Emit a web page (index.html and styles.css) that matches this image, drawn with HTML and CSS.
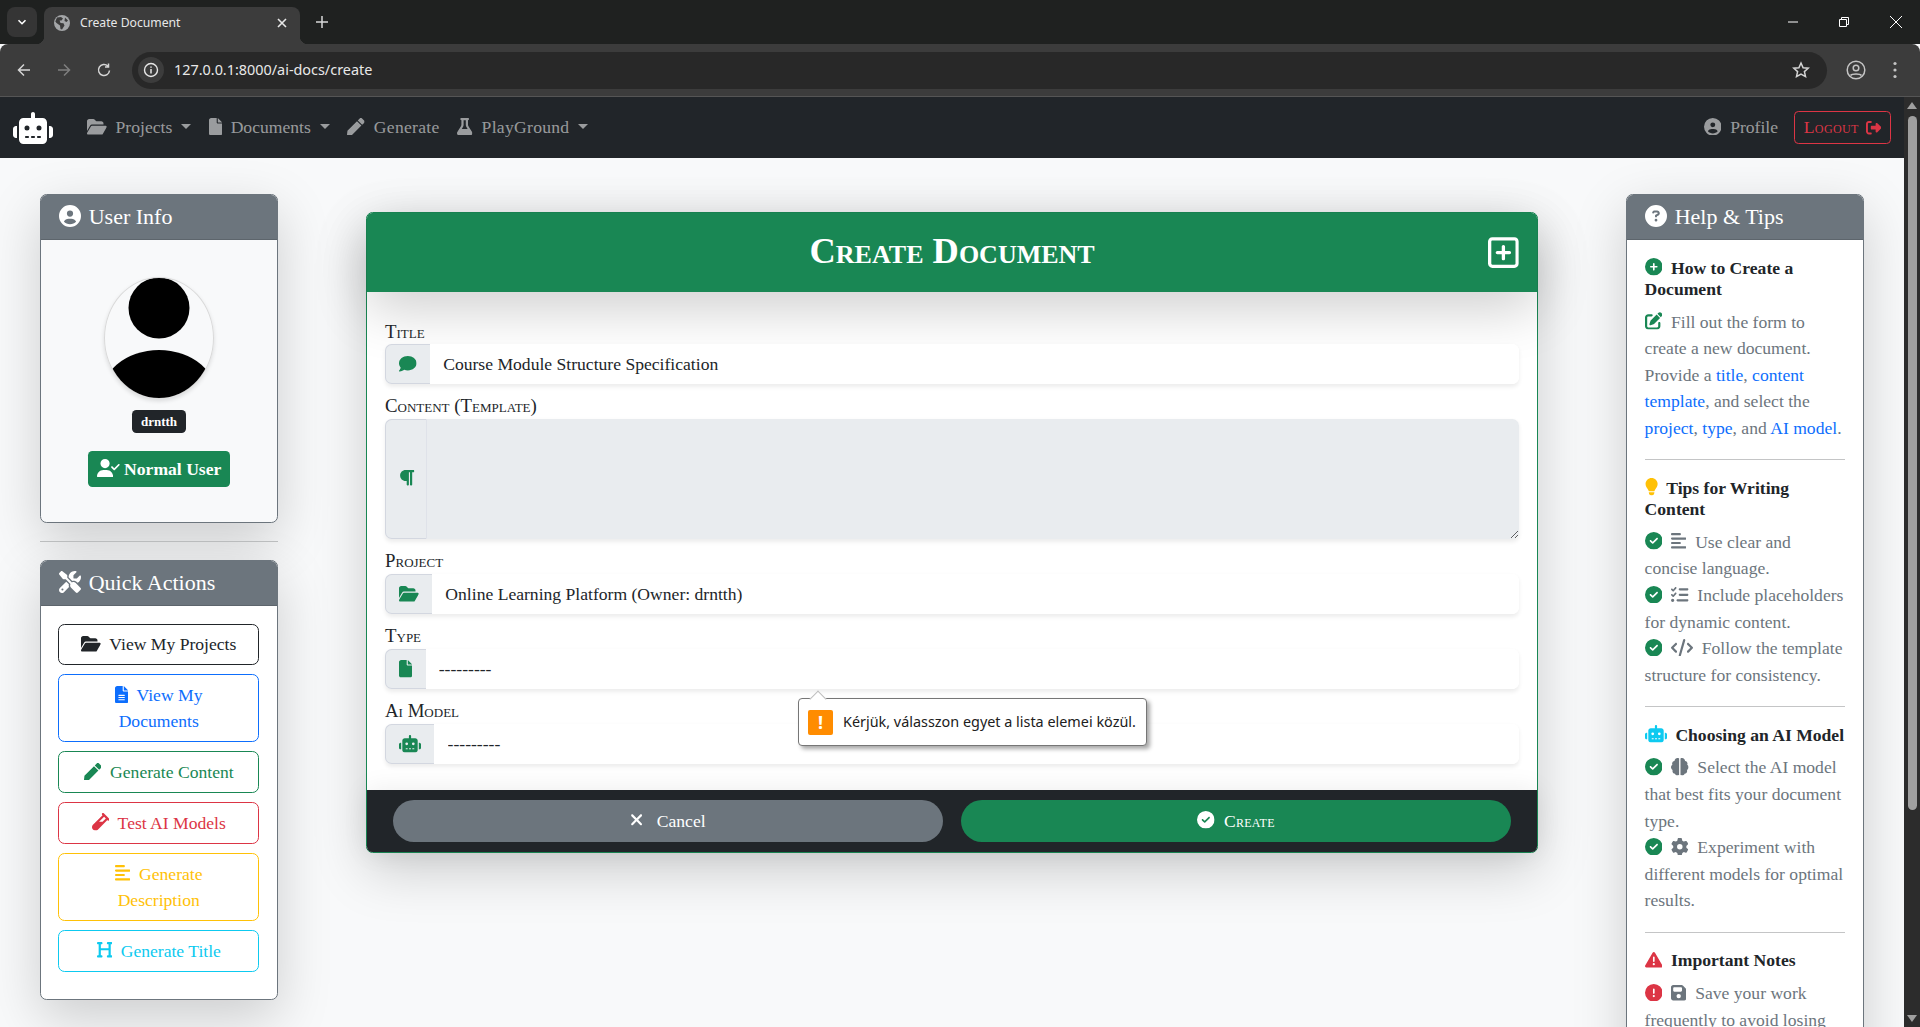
FILE: index.html
```html
<!DOCTYPE html>
<html lang="en">

<head>
    <meta charset="UTF-8">
    <meta name="viewport" content="width=device-width, initial-scale=1.0">
    <title>Create Document</title>
    <link rel="stylesheet" href="styles.css">
</head>

<body>
    <svg class="sprite" aria-hidden="true">
        <symbol id="i-robot" viewBox="0 0 640 512"><path d="M320 0c17.7 0 32 14.3 32 32V96H472c39.8 0 72 32.2 72 72V440c0 39.8-32.2 72-72 72H168c-39.8 0-72-32.2-72-72V168c0-39.8 32.2-72 72-72H288V32c0-17.7 14.3-32 32-32zM208 384c-8.8 0-16 7.2-16 16s7.2 16 16 16h32c8.8 0 16-7.2 16-16s-7.2-16-16-16H208zm96 0c-8.8 0-16 7.2-16 16s7.2 16 16 16h32c8.8 0 16-7.2 16-16s-7.2-16-16-16H304zm96 0c-8.8 0-16 7.2-16 16s7.2 16 16 16h32c8.8 0 16-7.2 16-16s-7.2-16-16-16H400zM264 256a40 40 0 1 0 -80 0 40 40 0 1 0 80 0zm152 40a40 40 0 1 0 0-80 40 40 0 1 0 0 80zM48 224H64V416H48c-26.5 0-48-21.5-48-48V272c0-26.5 21.5-48 48-48zm544 0c26.5 0 48 21.5 48 48v96c0 26.5-21.5 48-48 48H576V224h16z"/></symbol>
        <symbol id="i-folder" viewBox="0 0 576 512"><path d="M88.7 223.8L0 375.8V96C0 60.7 28.7 32 64 32H181.5c17 0 33.3 6.7 45.3 18.7l26.5 26.5c12 12 28.3 18.7 45.3 18.7H416c35.3 0 64 28.7 64 64v32H144c-22.8 0-43.8 12.1-55.3 31.8zm27.6 16.1C122.1 230 132.6 224 144 224H544c11.5 0 22 6.1 27.7 16.1s5.7 22.2-.1 32.1l-112 192C453.9 474 443.4 480 432 480H32c-11.5 0-22-6.1-27.7-16.1s-5.7-22.2 .1-32.1l112-192z"/></symbol>
        <symbol id="i-file" viewBox="0 0 384 512"><path d="M0 64C0 28.7 28.7 0 64 0H224V128c0 17.7 14.3 32 32 32H384V448c0 35.3-28.7 64-64 64H64c-35.3 0-64-28.7-64-64V64zm384 64H256V0L384 128z"/></symbol>
        <symbol id="i-file-lines" viewBox="0 0 384 512"><path d="M64 0C28.7 0 0 28.7 0 64V448c0 35.3 28.7 64 64 64H320c35.3 0 64-28.7 64-64V160H256c-17.7 0-32-14.3-32-32V0H64zM256 0V128H384L256 0zM112 256H272c8.8 0 16 7.2 16 16s-7.2 16-16 16H112c-8.8 0-16-7.2-16-16s7.2-16 16-16zm0 64H272c8.8 0 16 7.2 16 16s-7.2 16-16 16H112c-8.8 0-16-7.2-16-16s7.2-16 16-16zm0 64H272c8.8 0 16 7.2 16 16s-7.2 16-16 16H112c-8.8 0-16-7.2-16-16s7.2-16 16-16z"/></symbol>
        <symbol id="i-pen" viewBox="0 0 512 512"><path d="M290.74 93.24l128.02 128.02-277.99 277.99-114.14 12.6C11.35 513.54-1.56 500.62.14 485.34l12.7-114.22 277.9-277.88zm207.2-19.06l-60.11-60.11c-18.75-18.75-49.16-18.75-67.91 0l-56.55 56.55 128.02 128.02 56.55-56.55c18.75-18.76 18.75-49.16 0-67.91z"/></symbol>
        <symbol id="i-flask" viewBox="0 0 448 512"><path d="M288 0H160 128C110.3 0 96 14.3 96 32s14.3 32 32 32V196.8c0 11.8-3.3 23.5-9.5 33.5L10.3 406.2C3.6 417.2 0 429.7 0 442.6C0 480.9 31.1 512 69.4 512H378.6c38.3 0 69.4-31.1 69.4-69.4c0-12.8-3.6-25.4-10.3-36.4L329.5 230.4c-6.2-10.1-9.5-21.7-9.5-33.5V64c17.7 0 32-14.3 32-32s-14.3-32-32-32H288zM192 196.8V64h64V196.8c0 23.7 6.6 46.9 19 67.1L309.5 320h-171L173 263.9c12.4-20.2 19-43.4 19-67.1z"/></symbol>
        <symbol id="i-user-circle" viewBox="0 0 512 512"><path d="M399 384.2C376.9 345.8 335.4 320 288 320H224c-47.4 0-88.9 25.8-111 64.2c35.2 39.2 86.2 63.8 143 63.8s107.8-24.7 143-63.8zM0 256a256 256 0 1 1 512 0A256 256 0 1 1 0 256zm256 16a72 72 0 1 0 0-144 72 72 0 1 0 0 144z"/></symbol>
        <symbol id="i-logout" viewBox="0 0 512 512"><path d="M377.9 105.9L500.7 228.7c7.2 7.2 11.3 17.1 11.3 27.3s-4.1 20.1-11.3 27.3L377.9 406.1c-6.4 6.4-15 9.9-24 9.9c-18.7 0-33.9-15.2-33.9-33.9l0-62.1-128 0c-17.7 0-32-14.3-32-32l0-64c0-17.7 14.3-32 32-32l128 0 0-62.1c0-18.7 15.2-33.9 33.9-33.9c9 0 17.6 3.6 24 9.9zM160 96L96 96c-17.7 0-32 14.3-32 32l0 256c0 17.7 14.3 32 32 32l64 0c17.7 0 32 14.3 32 32s-14.3 32-32 32l-64 0c-53 0-96-43-96-96L0 128C0 75 43 32 96 32l64 0c17.7 0 32 14.3 32 32s-14.3 32-32 32z"/></symbol>
        <symbol id="i-user-check" viewBox="0 0 640 512"><path d="M96 128a128 128 0 1 1 256 0A128 128 0 1 1 96 128zM0 482.3C0 383.8 79.8 304 178.3 304h91.4C368.2 304 448 383.8 448 482.3c0 16.4-13.3 29.7-29.7 29.7H29.7C13.3 512 0 498.7 0 482.3zM625 177L497 305c-9.4 9.4-24.6 9.4-33.9 0l-64-64c-9.4-9.4-9.4-24.6 0-33.9s24.6-9.4 33.9 0L480 254.1 591 143c9.4-9.4 24.6-9.4 33.9 0s9.4 24.6 0 33.9z"/></symbol>
        <symbol id="i-tools" viewBox="0 0 512 512"><path d="M78.6 5C69.1-2.4 55.6-1.5 47 7L7 47c-8.5 8.5-9.4 22-2.1 31.6l80 104c4.5 5.9 11.6 9.4 19 9.4h54.1l109 109c-14.7 29-10 65.4 14.3 89.6l112 112c12.5 12.5 32.8 12.5 45.3 0l64-64c12.5-12.5 12.5-32.8 0-45.3l-112-112c-24.2-24.2-60.6-29-89.6-14.3l-109-109V104c0-7.5-3.5-14.5-9.4-19L78.6 5zM19.9 396.1C7.2 408.8 0 426.1 0 444.1C0 481.6 30.4 512 67.9 512c18 0 35.3-7.2 48-19.9L233.7 374.3c-7.8-20.9-9-43.6-3.6-65.1l-61.7-61.7L19.9 396.1zM512 144c0-10.5-1.1-20.7-3.2-30.5c-2.4-11.2-16.1-14.1-24.2-6l-63.9 63.9c-3 3-7.1 4.7-11.3 4.7H352c-8.8 0-16-7.2-16-16V102.6c0-4.2 1.7-8.3 4.7-11.3l63.9-63.9c8.1-8.1 5.2-21.8-6-24.2C388.7 1.1 378.5 0 368 0C288.5 0 224 64.5 224 144l0 .8 85.3 85.3c36-9.1 75.8 .5 104 28.7L429 274.5c49-23 83-72.8 83-130.5zM56 432a24 24 0 1 1 48 0 24 24 0 1 1 -48 0z"/></symbol>
        <symbol id="i-vial" viewBox="0 0 512 512"><path d="M342.6 9.4c-12.5-12.5-32.8-12.5-45.3 0s-12.5 32.8 0 45.3l9.4 9.4L28.1 342.6C10.1 360.6 0 385 0 410.5V416c0 53 43 96 96 96h5.5c25.5 0 49.9-10.1 67.9-28.1L448 205.3l9.4 9.4c12.5 12.5 32.8 12.5 45.3 0s12.5-32.8 0-45.3l-160-160zM205.3 256L352 109.3 402.7 160l-96 96H205.3z"/></symbol>
        <symbol id="i-align" viewBox="0 0 448 512"><path d="M288 64c0 17.7-14.3 32-32 32H32C14.3 96 0 81.7 0 64S14.3 32 32 32H256c17.7 0 32 14.3 32 32zm0 256c0 17.7-14.3 32-32 32H32c-17.7 0-32-14.3-32-32s14.3-32 32-32H256c17.7 0 32 14.3 32 32zM0 192c0-17.7 14.3-32 32-32H416c17.7 0 32 14.3 32 32s-14.3 32-32 32H32c-17.7 0-32-14.3-32-32zM448 448c0 17.7-14.3 32-32 32H32c-17.7 0-32-14.3-32-32s14.3-32 32-32H416c17.7 0 32 14.3 32 32z"/></symbol>
        <symbol id="i-heading" viewBox="0 0 448 512"><path d="M0 64C0 46.3 14.3 32 32 32H80h48c17.7 0 32 14.3 32 32s-14.3 32-32 32H112V208H336V96H320c-17.7 0-32-14.3-32-32s14.3-32 32-32h48 48c17.7 0 32 14.3 32 32s-14.3 32-32 32H400V240 416h16c17.7 0 32 14.3 32 32s-14.3 32-32 32H368 320c-17.7 0-32-14.3-32-32s14.3-32 32-32h16V272H112V416h16c17.7 0 32 14.3 32 32s-14.3 32-32 32H80 32c-17.7 0-32-14.3-32-32s14.3-32 32-32H48V240 96H32C14.3 96 0 81.7 0 64z"/></symbol>
        <symbol id="i-question" viewBox="0 0 512 512"><path d="M256 512A256 256 0 1 0 256 0a256 256 0 1 0 0 512zM169.8 165.3c7.9-22.3 29.1-37.3 52.8-37.3h58.3c34.9 0 63.1 28.3 63.1 63.1c0 22.6-12.1 43.5-31.7 54.8L280 264.4c-.2 13-10.9 23.6-24 23.6c-13.3 0-24-10.7-24-24V250.5c0-8.6 4.6-16.5 12.1-20.8l44.3-25.4c4.7-2.7 7.6-7.7 7.6-13.1c0-8.4-6.8-15.1-15.1-15.1H222.6c-3.4 0-6.4 2.1-7.5 5.3l-.4 1.2c-4.4 12.5-18.2 19-30.6 14.6s-19-18.2-14.6-30.6l.4-1.2zM224 352a32 32 0 1 1 64 0 32 32 0 1 1 -64 0z"/></symbol>
        <symbol id="i-circle-plus" viewBox="0 0 512 512"><path d="M256 512A256 256 0 1 0 256 0a256 256 0 1 0 0 512zM232 344V280H168c-13.3 0-24-10.7-24-24s10.7-24 24-24h64V168c0-13.3 10.7-24 24-24s24 10.7 24 24v64h64c13.3 0 24 10.7 24 24s-10.7 24-24 24H280v64c0 13.3-10.7 24-24 24s-24-10.7-24-24z"/></symbol>
        <symbol id="i-edit" viewBox="0 0 512 512"><path d="M471.6 21.7c-21.9-21.9-57.3-21.9-79.2 0L362.3 51.7l97.9 97.9 30.1-30.1c21.9-21.9 21.9-57.3 0-79.2L471.6 21.7zm-299.2 220c-6.1 6.1-10.8 13.6-13.5 21.9l-29.6 88.8c-2.9 8.6-.6 18.1 5.8 24.6s15.9 8.7 24.6 5.8l88.8-29.6c8.2-2.7 15.7-7.4 21.9-13.5L437.7 172.3 339.7 74.3 172.4 241.7zM96 64C43 64 0 107 0 160V416c0 53 43 96 96 96H352c53 0 96-43 96-96V320c0-17.7-14.3-32-32-32s-32 14.3-32 32v96c0 17.7-14.3 32-32 32H96c-17.7 0-32-14.3-32-32V160c0-17.7 14.3-32 32-32h96c17.7 0 32-14.3 32-32s-14.3-32-32-32H96z"/></symbol>
        <symbol id="i-bulb" viewBox="0 0 384 512"><path d="M272 384c9.6-31.9 29.5-59.1 49.2-86.2c5.2-7.1 10.4-14.2 15.4-21.4c19.8-28.5 31.4-63 31.4-100.3C368 78.8 289.2 0 192 0S16 78.8 16 176c0 37.3 11.6 71.9 31.4 100.3c5 7.2 10.2 14.3 15.4 21.4c19.8 27.1 39.7 54.4 49.2 86.2H272zM192 512c44.2 0 80-35.8 80-80V416H112v16c0 44.2 35.8 80 80 80z"/></symbol>
        <symbol id="i-check" viewBox="0 0 512 512"><path d="M256 512A256 256 0 1 0 256 0a256 256 0 1 0 0 512zM369 209L241 337c-9.4 9.4-24.6 9.4-33.9 0l-64-64c-9.4-9.4-9.4-24.6 0-33.9s24.6-9.4 33.9 0l47 47L335 175c9.4-9.4 24.6-9.4 33.9 0s9.4 24.6 0 33.9z"/></symbol>
        <symbol id="i-list-check" viewBox="0 0 512 512"><path d="M152.1 38.2c9.9 8.9 10.7 24 1.8 33.9l-72 80c-4.4 4.9-10.6 7.8-17.2 7.9s-12.9-2.4-17.6-7L7 113C-2.3 103.6-2.3 88.4 7 79s24.6-9.4 33.9 0l22.1 22.1 55.1-61.2c8.9-9.9 24-10.7 33.9-1.8zm0 160c9.9 8.9 10.7 24 1.8 33.9l-72 80c-4.4 4.9-10.6 7.8-17.2 7.9s-12.9-2.4-17.6-7L7 273c-9.4-9.4-9.4-24.6 0-33.9s24.6-9.4 33.9 0l22.1 22.1 55.1-61.2c8.9-9.9 24-10.7 33.9-1.8zM224 96c0-17.7 14.3-32 32-32H480c17.7 0 32 14.3 32 32s-14.3 32-32 32H256c-17.7 0-32-14.3-32-32zm0 160c0-17.7 14.3-32 32-32H480c17.7 0 32 14.3 32 32s-14.3 32-32 32H256c-17.7 0-32-14.3-32-32zM160 416c0-17.7 14.3-32 32-32H480c17.7 0 32 14.3 32 32s-14.3 32-32 32H192c-17.7 0-32-14.3-32-32zM48 368a48 48 0 1 1 0 96 48 48 0 1 1 0-96z"/></symbol>
        <symbol id="i-code" viewBox="0 0 640 512"><path d="M392.8 1.2c-17-4.9-34.7 5-39.6 22l-128 448c-4.9 17 5 34.7 22 39.6s34.7-5 39.6-22l128-448c4.9-17-5-34.7-22-39.6zm80.6 120.1c-12.5 12.5-12.5 32.8 0 45.3L562.7 256l-89.4 89.4c-12.5 12.5-12.5 32.8 0 45.3s32.8 12.5 45.3 0l112-112c12.5-12.5 12.5-32.8 0-45.3l-112-112c-12.5-12.5-32.8-12.5-45.3 0zm-306.7 0c-12.5-12.5-32.8-12.5-45.3 0l-112 112c-12.5 12.5-12.5 32.8 0 45.3l112 112c12.5 12.5 32.8 12.5 45.3 0s12.5-32.8 0-45.3L77.3 256l89.4-89.4c12.5-12.5 12.5-32.8 0-45.3z"/></symbol>
        <symbol id="i-brain" viewBox="0 0 512 512"><path d="M236 14v484c-12 10-30 14-48 14-34 0-62-22-72-52-44-6-74-42-74-84 0-10 2-20 5-28C20 332 0 302 0 268c0-30 16-56 40-72-6-12-8-24-8-36 0-40 30-72 68-76C110 36 148 0 188 0c18 0 36 4 48 14zM276 14c12-10 30-14 48-14 40 0 78 36 88 84 38 4 68 36 68 76 0 12-2 24-8 36 24 16 40 42 40 72 0 34-20 64-47 80 3 8 5 18 5 28 0 42-30 78-74 84-10 30-38 52-72 52-18 0-36-4-48-14V14z"/></symbol>
        <symbol id="i-gear" viewBox="0 0 512 512"><path d="M495.9 166.6c3.2 8.7 .5 18.4-6.4 24.6l-43.3 39.4c1.1 8.3 1.7 16.8 1.7 25.4s-.6 17.1-1.7 25.4l43.3 39.4c6.9 6.2 9.6 15.9 6.4 24.6c-4.4 11.9-9.7 23.3-15.8 34.3l-4.7 8.1c-6.6 11-14 21.4-22.1 31.2c-5.9 7.2-15.7 9.6-24.5 6.8l-55.7-17.7c-13.4 10.3-28.2 18.9-44 25.4l-12.5 57.1c-2 9.1-9 16.3-18.2 17.8c-13.8 2.3-28 3.5-42.5 3.5s-28.7-1.2-42.5-3.5c-9.2-1.5-16.2-8.7-18.2-17.8l-12.5-57.1c-15.8-6.5-30.6-15.1-44-25.4L83.1 425.9c-8.8 2.8-18.6 .3-24.5-6.8c-8.1-9.8-15.5-20.2-22.1-31.2l-4.7-8.1c-6.1-11-11.4-22.4-15.8-34.3c-3.2-8.7-.5-18.4 6.4-24.6l43.3-39.4C64.6 273.1 64 264.6 64 256s.6-17.1 1.7-25.4L22.4 191.2c-6.9-6.2-9.6-15.9-6.4-24.6c4.4-11.9 9.7-23.3 15.8-34.3l4.7-8.1c6.6-11 14-21.4 22.1-31.2c5.9-7.2 15.7-9.6 24.5-6.8l55.7 17.7c13.4-10.3 28.2-18.9 44-25.4l12.5-57.1c2-9.1 9-16.3 18.2-17.8C227.3 1.2 241.5 0 256 0s28.7 1.2 42.5 3.5c9.2 1.5 16.2 8.7 18.2 17.8l12.5 57.1c15.8 6.5 30.6 15.1 44 25.4l55.7-17.7c8.8-2.8 18.6-.3 24.5 6.8c8.1 9.8 15.5 20.2 22.1 31.2l4.7 8.1c6.1 11 11.4 22.4 15.8 34.3zM256 336a80 80 0 1 0 0-160 80 80 0 1 0 0 160z"/></symbol>
        <symbol id="i-warning" viewBox="0 0 512 512"><path d="M256 32c14.2 0 27.3 7.5 34.5 19.8l216 368c7.3 12.4 7.3 27.7 .2 40.1S486.3 480 472 480H40c-14.3 0-27.6-7.7-34.7-20.1s-7-27.8 .2-40.1l216-368C228.7 39.5 241.8 32 256 32zm0 128c-13.3 0-24 10.7-24 24V296c0 13.3 10.7 24 24 24s24-10.7 24-24V184c0-13.3-10.7-24-24-24zm32 224a32 32 0 1 0 -64 0 32 32 0 1 0 64 0z"/></symbol>
        <symbol id="i-exclaim" viewBox="0 0 512 512"><path d="M256 512A256 256 0 1 0 256 0a256 256 0 1 0 0 512zm0-384c13.3 0 24 10.7 24 24V264c0 13.3-10.7 24-24 24s-24-10.7-24-24V152c0-13.3 10.7-24 24-24zM224 352a32 32 0 1 1 64 0 32 32 0 1 1 -64 0z"/></symbol>
        <symbol id="i-save" viewBox="0 0 448 512"><path d="M64 32C28.7 32 0 60.7 0 96V416c0 35.3 28.7 64 64 64H384c35.3 0 64-28.7 64-64V173.3c0-17-6.7-33.3-18.7-45.3L352 50.7C340 38.7 323.7 32 306.7 32H64zm0 96c0-17.7 14.3-32 32-32H288c17.7 0 32 14.3 32 32v64c0 17.7-14.3 32-32 32H96c-17.7 0-32-14.3-32-32V128zM224 288a64 64 0 1 1 0 128 64 64 0 1 1 0-128z"/></symbol>
        <symbol id="i-comment" viewBox="0 0 512 512"><path d="M512 240c0 114.9-114.6 208-256 208c-37.1 0-72.3-6.4-104.1-17.9c-11.9 8.7-31.3 20.6-54.3 30.6C73.6 471.1 44.7 480 16 480c-6.5 0-12.3-3.9-14.8-9.9c-2.5-6-1.1-12.8 3.4-17.4c.3-.3 .7-.7 1.3-1.4c1.1-1.2 2.8-3.1 4.9-5.7c4.1-5 9.6-12.4 15.2-21.6c10-16.6 19.5-38.4 21.4-62.9C17.7 326.8 0 285.1 0 240C0 125.1 114.6 32 256 32s256 93.1 256 208z"/></symbol>
        <symbol id="i-paragraph" viewBox="0 0 448 512"><path d="M192 32h64H416c17.7 0 32 14.3 32 32s-14.3 32-32 32H384l0 352c0 17.7-14.3 32-32 32s-32-14.3-32-32l0-352H288l0 352c0 17.7-14.3 32-32 32s-32-14.3-32-32l0-96H192c-88.4 0-160-71.6-160-160s71.6-160 160-160z"/></symbol>
        <symbol id="i-xmark" viewBox="0 0 384 512"><path d="M342.6 150.6c12.5-12.5 12.5-32.8 0-45.3s-32.8-12.5-45.3 0L192 210.7 86.6 105.4c-12.5-12.5-32.8-12.5-45.3 0s-12.5 32.8 0 45.3L146.7 256 41.4 361.4c-12.5 12.5-12.5 32.8 0 45.3s32.8 12.5 45.3 0L192 301.3 297.4 406.6c12.5 12.5 32.8 12.5 45.3 0s12.5-32.8 0-45.3L237.3 256 342.6 150.6z"/></symbol>
        <symbol id="i-square-plus" viewBox="0 0 448 512"><path d="M64 80c-8.8 0-16 7.2-16 16V416c0 8.8 7.2 16 16 16H384c8.8 0 16-7.2 16-16V96c0-8.8-7.2-16-16-16H64zM0 96C0 60.7 28.7 32 64 32H384c35.3 0 64 28.7 64 64V416c0 35.3-28.7 64-64 64H64c-35.3 0-64-28.7-64-64V96zM200 344V280H136c-13.3 0-24-10.7-24-24s10.7-24 24-24h64V168c0-13.3 10.7-24 24-24s24 10.7 24 24v64h64c13.3 0 24 10.7 24 24s-10.7 24-24 24H248v64c0 13.3-10.7 24-24 24s-24-10.7-24-24z"/></symbol>
    </svg>

    <!-- browser window -->
    <div class="tabstrip">
        <button class="tab-search" aria-label="Search tabs">
            <svg width="12" height="12" viewBox="0 0 12 12"><path d="M2.5 4.2 6 7.7l3.5-3.5" fill="none" stroke="#fff" stroke-width="1.6"/></svg>
        </button>
        <div class="tab">
            <svg class="favicon" viewBox="0 0 16 16"><circle cx="8" cy="8" r="8" fill="#a4a6a8"/><path d="M3 2.5 7 2l2 1.6-1.5 2L5.600 5.400 6.500 8 9.500 8.300 10.500 10.500 8 14.500 6.500 14 6 10.500 2.500 8 1.300 6.500zM11 2.500l3 3-1.500 1.500-2-1z" fill="#3c3c3c"/></svg>
            <span class="tab-title">Create Document</span>
            <svg class="tab-close" width="10" height="10" viewBox="0 0 10 10"><path d="M1 1l8 8M9 1l-8 8" stroke="#e8e8e8" stroke-width="1.6"/></svg>
        </div>
        <svg class="new-tab" width="14" height="14" viewBox="0 0 14 14"><path d="M7 1v12M1 7h12" stroke="#d8d8d8" stroke-width="1.5"/></svg>
        <div class="win-controls">
            <svg width="12" height="12" viewBox="0 0 12 12"><path d="M1 6h10" stroke="#fff"/></svg>
            <svg width="12" height="12" viewBox="0 0 12 12"><path d="M1.500 3.500h7v7h-7zM3.500 3.500V1.500h7v7H8.500" fill="none" stroke="#fff"/></svg>
            <svg width="14" height="14" viewBox="0 0 14 14"><path d="M1 1l12 12M13 1L1 13" stroke="#fff"/></svg>
        </div>
    </div>
    <div class="toolbar">
        <svg class="tb-icon" viewBox="0 0 16 16"><path d="M14 8H2.500M8 2.500 2.500 8 8 13.500" fill="none" stroke="#d5d5d5" stroke-width="1.500"/></svg>
        <svg class="tb-icon" viewBox="0 0 16 16"><path d="M2 8h11.500M8 2.500 13.500 8 8 13.500" fill="none" stroke="#7f7f7f" stroke-width="1.500"/></svg>
        <svg class="tb-icon" viewBox="0 0 16 16"><path d="M13.500 8.500A5.500 5.500 0 1 1 11.800 4M12.500 1.500V5H9" fill="none" stroke="#d5d5d5" stroke-width="1.500"/></svg>
        <div class="omnibox">
            <span class="site-info">
                <svg width="16" height="16" viewBox="0 0 16 16"><circle cx="8" cy="8" r="6.500" fill="none" stroke="#e8e8e8" stroke-width="1.400"/><path d="M8 7v4.500M8 4.400v1.400" stroke="#e8e8e8" stroke-width="1.500"/></svg>
            </span>
            <span class="url">127.0.0.1:8000/ai-docs/create</span>
            <svg class="star" width="18" height="18" viewBox="0 0 18 18"><path d="M9 2l2.100 4.700 5.100.5-3.800 3.400 1.100 5L9 13l-4.500 2.600 1.100-5L1.800 7.200l5.100-.5z" fill="none" stroke="#d5d5d5" stroke-width="1.500"/></svg>
        </div>
        <svg class="profile-btn" width="20" height="20" viewBox="0 0 20 20"><circle cx="10" cy="10" r="8.800" fill="none" stroke="#c4c4c4" stroke-width="1.500"/><circle cx="10" cy="8" r="2.800" fill="none" stroke="#c4c4c4" stroke-width="1.500"/><path d="M4.500 15.500c1.500-2 9.500-2 11 0" fill="none" stroke="#c4c4c4" stroke-width="1.500"/></svg>
        <svg class="menu-btn" width="4" height="18" viewBox="0 0 4 18"><circle cx="2" cy="2.500" r="1.600" fill="#c4c4c4"/><circle cx="2" cy="9" r="1.600" fill="#c4c4c4"/><circle cx="2" cy="15.500" r="1.600" fill="#c4c4c4"/></svg>
    </div>

    <div class="viewport">
        <div class="page">
            <nav class="navbar">
                <svg class="ico w640 brand"><use href="#i-robot"/></svg>
                <ul class="nav-links">
                    <li><a class="nav-link caret"><svg class="ico w576"><use href="#i-folder"/></svg> Projects</a></li>
                    <li><a class="nav-link caret"><svg class="ico w384"><use href="#i-file"/></svg> Documents</a></li>
                    <li><a class="nav-link nav-wide"><svg class="ico"><use href="#i-pen"/></svg> Generate</a></li>
                    <li><a class="nav-link nav-wide caret"><svg class="ico w448"><use href="#i-flask"/></svg> PlayGround</a></li>
                </ul>
                <a class="nav-link"><svg class="ico"><use href="#i-user-circle"/></svg> Profile</a>
                <a class="logout">Logout <svg class="ico"><use href="#i-logout"/></svg></a>
            </nav>

            <main class="layout">
                <aside>
                    <section class="card card-soft">
                        <h5 class="card-header"><svg class="ico"><use href="#i-user-circle"/></svg> User Info</h5>
                        <div class="card-body user-body">
                            <div class="avatar">
                                <svg width="108" height="120" viewBox="0 0 108 120">
                                    <circle cx="54" cy="30" r="30.500"/>
                                    <ellipse cx="54" cy="122" rx="60" ry="50"/>
                                </svg>
                            </div>
                            <span class="badge">drntth</span>
                            <span class="role"><svg class="ico w640"><use href="#i-user-check"/></svg> Normal User</span>
                        </div>
                    </section>
                    <hr class="side-rule">
                    <section class="card">
                        <h5 class="card-header"><svg class="ico"><use href="#i-tools"/></svg> Quick Actions</h5>
                        <div class="card-body qa-body">
                            <a class="qa-btn qa-dark"><svg class="ico w576"><use href="#i-folder"/></svg> View My Projects</a>
                            <a class="qa-btn qa-blue"><svg class="ico w384"><use href="#i-file-lines"/></svg> View My<br>Documents</a>
                            <a class="qa-btn qa-green"><svg class="ico"><use href="#i-pen"/></svg> Generate Content</a>
                            <a class="qa-btn qa-red"><svg class="ico"><use href="#i-vial"/></svg> Test AI Models</a>
                            <a class="qa-btn qa-yellow"><svg class="ico w448"><use href="#i-align"/></svg> Generate Description</a>
                            <a class="qa-btn qa-cyan"><svg class="ico w448"><use href="#i-heading"/></svg> Generate Title</a>
                        </div>
                    </section>
                </aside>

                <section class="form-card">
                    <header class="form-header">
                        <h2>Create Document</h2>
                        <svg class="ico w448 form-header-icon"><use href="#i-square-plus"/></svg>
                    </header>
                    <form class="form-body">
                        <label class="field-label">Title</label>
                        <div class="input-group">
                            <span class="addon"><svg class="ico"><use href="#i-comment"/></svg></span>
                            <input class="field" type="text" value="Course Module Structure Specification">
                        </div>
                        <label class="field-label">Content (Template)</label>
                        <div class="input-group input-group-tall">
                            <span class="addon addon-tall"><svg class="ico w448"><use href="#i-paragraph"/></svg></span>
                            <textarea class="field field-area" disabled></textarea>
                        </div>
                        <label class="field-label">Project</label>
                        <div class="input-group">
                            <span class="addon"><svg class="ico w576"><use href="#i-folder"/></svg></span>
                            <select class="field"><option>Online Learning Platform (Owner: drntth)</option></select>
                        </div>
                        <label class="field-label">Type</label>
                        <div class="input-group">
                            <span class="addon"><svg class="ico w384"><use href="#i-file"/></svg></span>
                            <select class="field"><option>---------</option></select>
                        </div>
                        <label class="field-label">Ai Model</label>
                        <div class="input-group">
                            <span class="addon"><svg class="ico w640"><use href="#i-robot"/></svg></span>
                            <select class="field"><option>---------</option></select>
                        </div>
                    </form>
                    <footer class="form-footer">
                        <button class="pill pill-cancel"><svg class="ico w384"><use href="#i-xmark"/></svg> Cancel</button>
                        <button class="pill pill-create"><svg class="ico"><use href="#i-check"/></svg> Create</button>
                    </footer>
                </section>

                <aside>
                    <section class="card">
                        <h5 class="card-header"><svg class="ico"><use href="#i-question"/></svg> Help &amp; Tips</h5>
                        <div class="card-body help-body">
                            <h6><svg class="ico green"><use href="#i-circle-plus"/></svg> How to Create a Document</h6>
                            <p><svg class="ico green"><use href="#i-edit"/></svg> Fill out the form to create a new document. Provide a <span class="hl">title</span>, <span class="hl">content template</span>, and select the <span class="hl">project</span>, <span class="hl">type</span>, and <span class="hl">AI model</span>.</p>
                            <hr>
                            <h6><svg class="ico w384 yellow"><use href="#i-bulb"/></svg> Tips for Writing Content</h6>
                            <ul>
                                <li><svg class="ico green"><use href="#i-check"/></svg> <svg class="ico w448"><use href="#i-align"/></svg> Use clear and concise language.</li>
                                <li><svg class="ico green"><use href="#i-check"/></svg> <svg class="ico"><use href="#i-list-check"/></svg> Include placeholders for dynamic content.</li>
                                <li><svg class="ico green"><use href="#i-check"/></svg> <svg class="ico w640"><use href="#i-code"/></svg> Follow the template structure for consistency.</li>
                            </ul>
                            <hr>
                            <h6><svg class="ico w640 cyan"><use href="#i-robot"/></svg> Choosing an AI Model</h6>
                            <ul>
                                <li><svg class="ico green"><use href="#i-check"/></svg> <svg class="ico"><use href="#i-brain"/></svg> Select the AI model that best fits your document type.</li>
                                <li><svg class="ico green"><use href="#i-check"/></svg> <svg class="ico"><use href="#i-gear"/></svg> Experiment with different models for optimal results.</li>
                            </ul>
                            <hr>
                            <h6><svg class="ico red"><use href="#i-warning"/></svg> Important Notes</h6>
                            <ul>
                                <li><svg class="ico red"><use href="#i-exclaim"/></svg> <svg class="ico w448"><use href="#i-save"/></svg> Save your work frequently to avoid losing your data.</li>
                            </ul>
                        </div>
                    </section>
                </aside>
            </main>
        </div>

        <div class="scrollbar">
            <span class="sb-up"></span>
            <span class="sb-thumb"></span>
            <span class="sb-down"></span>
        </div>
    </div>

    <!-- the browser's validation bubble on the Type select -->
    <div class="bubble">
        <span class="bubble-icon">!</span>
        <span>Kérjük, válasszon egyet a lista elemei közül.</span>
    </div>
</body>

</html>
```

FILE: styles.css
```css
html {
    font-size: 17.6px;
}

body {
    margin: 0;
    height: 100vh;
    overflow: hidden;
    display: flex;
    flex-direction: column;
    font-family: "Liberation Serif", "Times New Roman", serif;
    font-size: 1rem;
    line-height: 1.5;
    color: #212529;
    background-color: #f8f9fa;
}

.sprite {
    display: none;
}

/* icons */
.ico {
    width: 1em;
    height: 1em;
    fill: currentColor;
    vertical-align: -0.125em;
    flex: none;
}

.w640 {
    width: 1.25em;
}

.w576 {
    width: 1.125em;
}

.w448 {
    width: 0.875em;
}

.w384 {
    width: 0.75em;
}

.green {
    color: #198754;
}

.yellow {
    color: #ffc107;
}

.cyan {
    color: #0dcaf0;
}

.red {
    color: #dc3545;
}

/* browser chrome */
.tabstrip {
    height: 44px;
    flex: none;
    display: flex;
    align-items: flex-end;
    background-color: #1f2120;
    font-family: "Noto Sans", sans-serif;
}

.tab-search {
    width: 30px;
    height: 30px;
    margin: 0 7px 7px 7px;
    padding: 0;
    border: none;
    border-radius: 8px;
    background-color: #353535;
    display: flex;
    align-items: center;
    justify-content: center;
}

.tab {
    position: relative;
    width: 256px;
    height: 37px;
    box-sizing: border-box;
    padding: 0 13px 6px 10px;
    display: flex;
    align-items: center;
    gap: 10px;
    border-radius: 8px 8px 0 0;
    background-color: #3c3c3c;
    color: #e8e8e8;
    font-size: 12.2px;
}

.tab::before,
.tab::after {
    content: "";
    position: absolute;
    bottom: 0;
    width: 8px;
    height: 8px;
    background-color: #3c3c3c;
    -webkit-mask: radial-gradient(circle at 0 0, transparent 8px, #000 8.5px);
    mask: radial-gradient(circle at 0 0, transparent 8px, #000 8.5px);
}

.tab::before {
    left: -8px;
}

.tab::after {
    right: -8px;
    -webkit-mask: radial-gradient(circle at 100% 0, transparent 8px, #000 8.5px);
    mask: radial-gradient(circle at 100% 0, transparent 8px, #000 8.5px);
}

.favicon {
    width: 16px;
    height: 16px;
    flex: none;
}

.tab-title {
    flex: 1;
    white-space: nowrap;
    padding-top: 2px;
}

.tab-close {
    flex: none;
}

.new-tab {
    margin: 0 0 15px 15px;
}

.win-controls {
    margin: 0 17px 15px auto;
    display: flex;
    align-items: center;
    gap: 39px;
}

.toolbar {
    height: 52px;
    flex: none;
    box-sizing: content-box;
    display: flex;
    align-items: center;
    border-bottom: 1px solid #555;
    border-radius: 8px 8px 0 0;
    background-color: #3c3c3c;
    font-family: "Noto Sans", sans-serif;
}

.tb-icon {
    width: 16px;
    height: 16px;
    margin-left: 16px;
    margin-right: 8px;
    flex: none;
}

.omnibox {
    flex: 1;
    height: 37px;
    margin-left: 12px;
    display: flex;
    align-items: center;
    border-radius: 19px;
    background-color: #282828;
    color: #e8e8e8;
    font-size: 14.4px;
}

.site-info {
    width: 26px;
    height: 26px;
    margin-left: 6px;
    display: flex;
    align-items: center;
    justify-content: center;
    border-radius: 50%;
    background-color: #3c3c3c;
}

.url {
    margin-left: 10px;
    flex: 1;
    padding-bottom: 1px;
}

.star {
    margin-right: 17px;
}

.profile-btn {
    margin-left: 19px;
}

.menu-btn {
    margin: 0 23px 0 27px;
}

/* page area */
.viewport {
    flex: 1;
    min-height: 0;
    display: flex;
}

.page {
    flex: 1;
    min-width: 0;
    overflow: hidden;
}

.scrollbar {
    width: 16px;
    flex: none;
    position: relative;
    display: flex;
    flex-direction: column;
    align-items: center;
    background-color: #2c2c2c;
}

.sb-up,
.sb-down {
    width: 0;
    height: 0;
    border-left: 5px solid transparent;
    border-right: 5px solid transparent;
}

.sb-up {
    margin-top: 5px;
    border-bottom: 7px solid #9f9f9f;
}

.sb-thumb {
    width: 9px;
    height: 694px;
    margin-top: 7px;
    border-radius: 5px;
    background-color: #9f9f9f;
}

.sb-down {
    margin-top: auto;
    margin-bottom: 5px;
    border-top: 7px solid #9f9f9f;
}

/* navbar */
.navbar {
    height: 61px;
    padding: 0 13.2px;
    display: flex;
    align-items: center;
    background-color: #212529;
    color: rgba(255, 255, 255, 0.55);
}

.brand {
    font-size: 32px;
    color: #fff;
    margin-right: 25px;
}

.nav-links {
    flex: 1;
    display: flex;
    margin: 0;
    padding: 0;
    list-style: none;
}

.nav-link {
    display: block;
    padding: 0.5rem;
    white-space: nowrap;
}

.nav-wide {
    letter-spacing: 0.28px;
}

.nav-link .ico {
    margin-right: 0.25rem;
}

.caret::after {
    content: "";
    display: inline-block;
    margin-left: 0.5em;
    vertical-align: 0.255em;
    border-top: 0.3em solid;
    border-left: 0.3em solid transparent;
    border-right: 0.3em solid transparent;
}

.logout {
    margin-left: 7px;
    padding: 2.8px 8.8px;
    border: 1px solid #dc3545;
    border-radius: 0.25rem;
    color: #dc3545;
    font-variant: small-caps;
    letter-spacing: 0.4px;
    white-space: nowrap;
}

.logout .ico {
    font-size: 15.4px;
    margin-left: 2px;
}

/* three columns */
.layout {
    display: grid;
    grid-template-columns: 238px 1fr 238px;
    column-gap: 88px;
    align-items: start;
    padding: 36px 40px 0;
}

.card {
    border: 1px solid #6c757d;
    border-radius: 0.375rem;
    background-color: #fff;
    box-shadow: 0 1rem 3rem rgba(0, 0, 0, 0.175);
    overflow: hidden;
}

.card-soft {
    background-color: #f8f9fa;
}

.card-header {
    margin: 0;
    padding: 0.5rem 1rem;
    border-bottom: 1px solid #5d656c;
    background-color: #6c757d;
    color: #fff;
    font-size: 1.25rem;
    font-weight: 400;
    line-height: 1.2;
}

.card-header .ico {
    margin-right: 0.15rem;
}

.card-body {
    padding: 1rem;
}

.qa-body {
    padding-left: 17px;
}

.user-body {
    display: flex;
    flex-direction: column;
    align-items: center;
    padding-top: 37px;
    padding-bottom: 35px;
}

.avatar {
    width: 108px;
    height: 120px;
    border: 1px solid #d9d9d9;
    border-radius: 50%;
    overflow: hidden;
    box-shadow: 0 0.125rem 0.25rem rgba(0, 0, 0, 0.12);
}

.avatar svg {
    display: block;
}

.badge {
    margin-top: 11px;
    padding: 0 9px;
    height: 23px;
    border-radius: 0.25rem;
    background-color: #212529;
    color: #fff;
    font-size: 13px;
    font-weight: 700;
    line-height: 23px;
}

.role {
    margin-top: 18px;
    height: 36px;
    padding: 0 9px;
    border-radius: 0.25rem;
    background-color: #198754;
    color: #fff;
    font-weight: 700;
    line-height: 36px;
    white-space: nowrap;
}

.role .ico {
    font-size: 18.4px;
}

.side-rule {
    margin: 18px 0;
    border: none;
    border-top: 1px solid #bdbfc0;
}

.qa-btn {
    display: block;
    padding: 0.375rem 0.75rem;
    margin-bottom: 9.2px;
    border: 1px solid;
    border-radius: 0.375rem;
    text-align: center;
}

.qa-btn .ico {
    margin-right: 0.25rem;
}

.qa-dark {
    color: #212529;
}

.qa-blue {
    color: #0d6efd;
}

.qa-green {
    color: #198754;
}

.qa-red {
    color: #dc3545;
}

.qa-yellow {
    color: #ffc107;
}

.qa-cyan {
    color: #0dcaf0;
}

/* form card */
.form-card {
    margin-top: 18px;
    border: 1px solid #198754;
    border-radius: 0.375rem;
    background-color: #fff;
    box-shadow: 0 1rem 3rem rgba(0, 0, 0, 0.175);
}

.form-header {
    height: 79px;
    display: flex;
    align-items: center;
    justify-content: center;
    padding: 0 18px;
    border-radius: 0.3rem 0.3rem 0 0;
    background-color: #198754;
    color: #fff;
    box-shadow: 0 1rem 3rem rgba(0, 0, 0, 0.19);
}

.form-header h2 {
    flex: 1;
    margin: 0;
    padding: 0 0 1px 31px;
    text-align: center;
    font-size: 2.07rem;
    font-variant: small-caps;
    font-weight: 700;
    line-height: 1.2;
}

.form-header-icon {
    font-size: 2rem;
}

.form-body {
    padding: 24.5px 18px 19px;
}

.field-label {
    display: block;
    padding-top: 2px;
    font-size: 1.07rem;
    font-variant: small-caps;
    line-height: 25.7px;
}

.input-group {
    height: 40px;
    display: flex;
    margin-bottom: 7.2px;
    border-radius: 0.375rem;
    background-color: #fff;
    box-shadow: 0 0.125rem 0.25rem rgba(0, 0, 0, 0.075);
}

.input-group-tall {
    height: 120px;
}

.addon {
    display: flex;
    align-items: center;
    padding: 0 0.75rem;
    border: 1px solid #d3d7e0;
    border-right: none;
    border-radius: 0.375rem 0 0 0.375rem;
    background-color: #e9ecef;
    color: #198754;
}

.addon-tall {
    box-sizing: border-box;
    padding-bottom: 2px;
    border-right: 1px solid #dfe2e9;
    width: 42px;
}

.field {
    flex: 1;
    min-width: 0;
    box-sizing: border-box;
    padding: 0 0.75rem;
    border: none;
    border-radius: 0 0.375rem 0.375rem 0;
    outline: none;
    background-color: #fff;
    color: #212529;
    font: inherit;
    -webkit-appearance: none;
    appearance: none;
}

.field-area {
    display: block;
    padding: 0.375rem 0.75rem;
    background-color: #e9ecef;
    resize: vertical;
}

.form-footer {
    display: flex;
    gap: 18px;
    padding: 10px 26px;
    border-radius: 0 0 0.3rem 0.3rem;
    background-color: #212529;
    box-shadow: 0 0 1.5rem rgba(0, 0, 0, 0.08);
}

.pill {
    flex: 1;
    height: 42px;
    padding: 0;
    border: none;
    border-radius: 21px;
    color: #fff;
    font: inherit;
}

.pill .ico {
    margin-right: 0.25rem;
}

.pill-cancel {
    background-color: #6c757d;
}

.pill-cancel .ico {
    margin-right: 0.5rem;
}

.pill-create {
    background-color: #198754;
    font-variant: small-caps;
    letter-spacing: 0.3px;
}

/* help column */
.help-body h6 {
    margin: 0 0 0.5rem;
    font-size: 1rem;
    font-weight: 700;
    line-height: 1.2;
}

.help-body .ico {
    margin-right: 0.25rem;
}

.help-body p {
    margin: 0;
    color: #6c757d;
    line-height: 26.6px;
}

.help-body ul {
    margin: 0;
    padding: 0;
    list-style: none;
    color: #6c757d;
    line-height: 26.6px;
}

.help-body hr {
    margin: 1rem 0;
    border: none;
    border-top: 1px solid #c4c5c6;
}

.hl {
    color: #0d6efd;
}

/* validation bubble */
.bubble {
    position: absolute;
    left: 798px;
    top: 698px;
    height: 48px;
    box-sizing: border-box;
    padding: 0 10px 0 9px;
    display: flex;
    align-items: center;
    gap: 10px;
    border: 1px solid #767676;
    border-radius: 4px;
    background-color: #fff;
    box-shadow: 3px 3px 4px rgba(0, 0, 0, 0.35);
    color: #202020;
    font-family: "Noto Sans", sans-serif;
    font-size: 14.4px;
    white-space: nowrap;
}

.bubble::before {
    content: "";
    position: absolute;
    left: 13px;
    top: -6px;
    width: 11px;
    height: 11px;
    border-left: 1px solid #bdbdbd;
    border-top: 1px solid #bdbdbd;
    background-color: #fff;
    transform: rotate(45deg);
}

.bubble-icon {
    width: 25px;
    height: 25px;
    border-radius: 2px;
    background-color: #ff8c00;
    color: #fff;
    font-size: 18px;
    font-weight: 700;
    line-height: 25px;
    text-align: center;
}
```
